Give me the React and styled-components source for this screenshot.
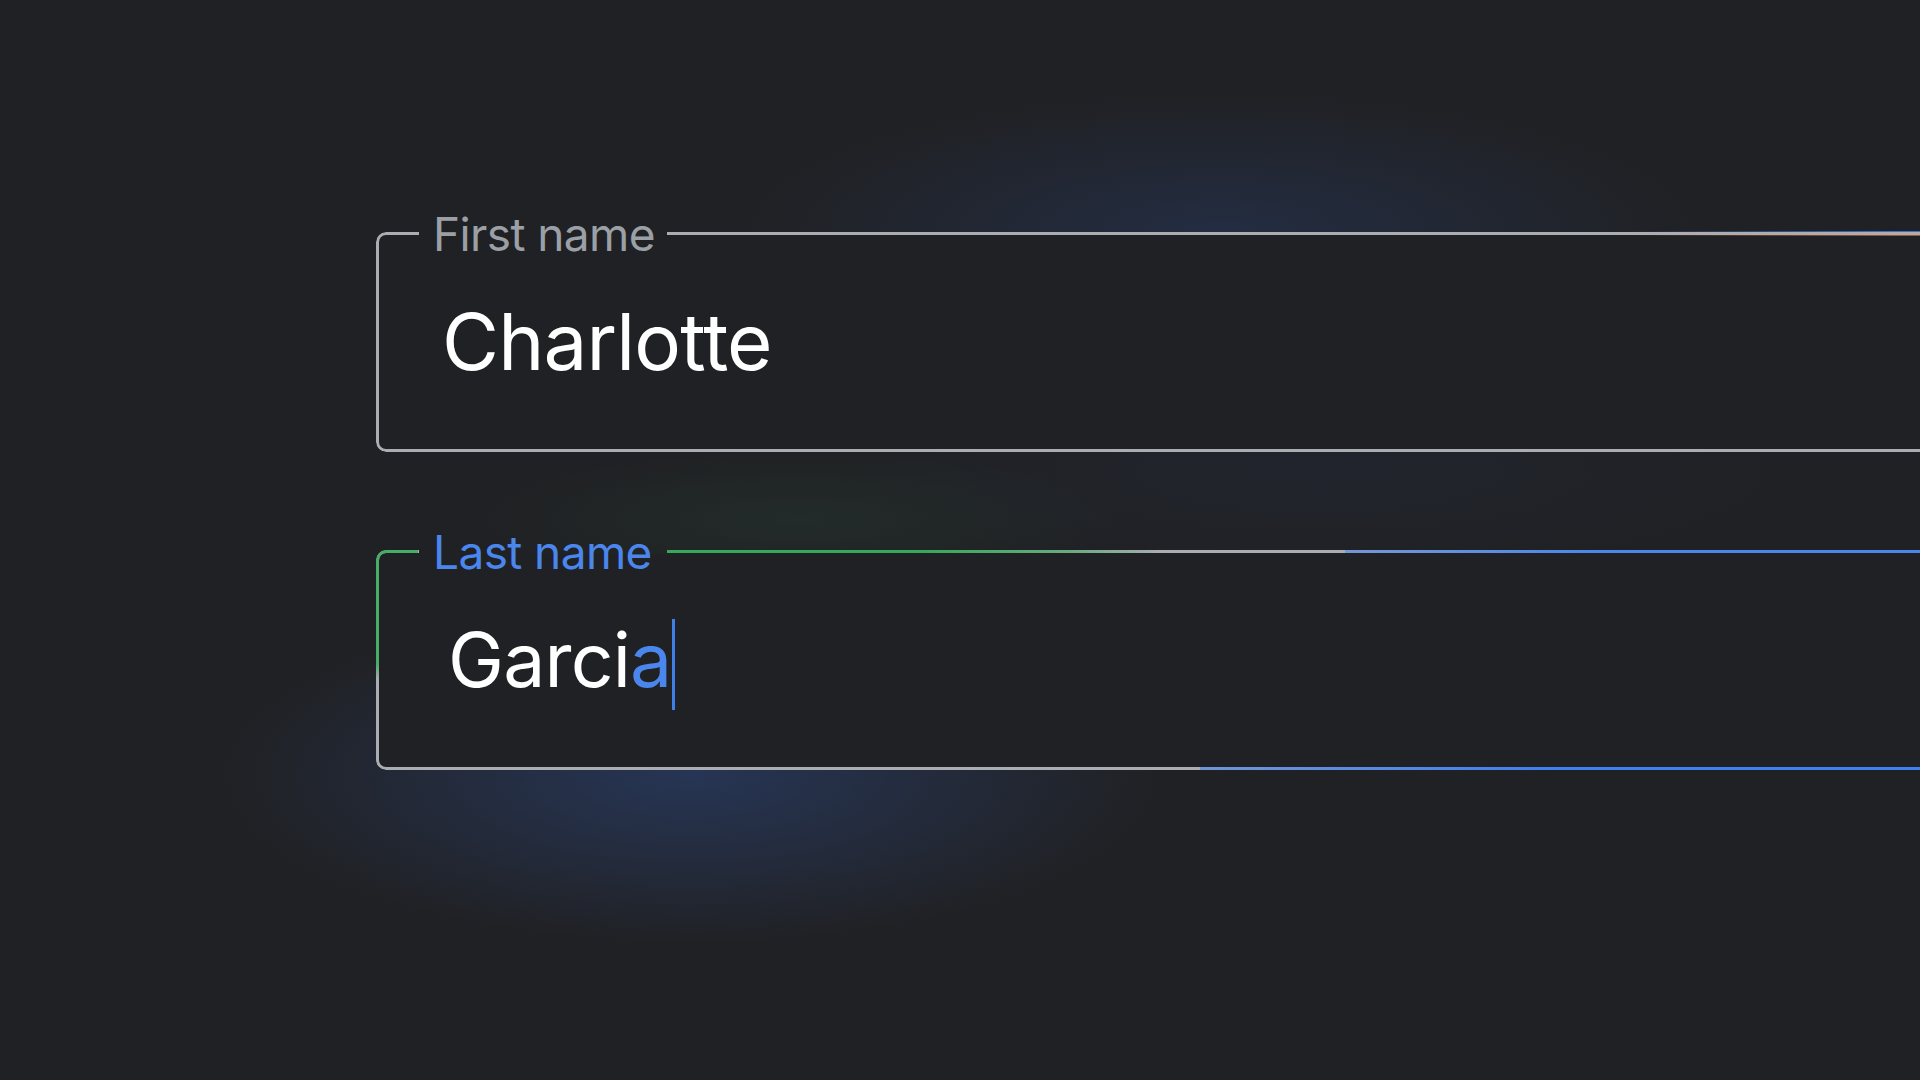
import React from 'react';
import styled, { createGlobalStyle } from 'styled-components';

const GlobalStyle = createGlobalStyle`
  html, body {
    margin: 0;
    padding: 0;
    background: #202124;
    overflow: hidden;
  }
`;

const fields = [
  { label: 'First name', value: 'Charlotte', focused: false },
  { label: 'Last name', value: 'Garcia', focused: true },
];

const App = () => {
  return (
    <>
      <GlobalStyle />
      <Page>
        <Form>
          {fields.map((field) => (
            <Field key={field.label} $focused={field.focused}>
              <Label $focused={field.focused}>{field.label}</Label>
              {field.focused ? (
                <>
                  <CornerStroke />
                  <TopStroke />
                  <TopBlueStroke />
                  <BottomBlueStroke />
                </>
              ) : (
                <EdgeFringe />
              )}
              <Value $focused={field.focused}>
                {field.focused ? (
                  <>
                    {field.value.slice(0, -1)}
                    <Typed>{field.value.slice(-1)}</Typed>
                    <Caret />
                  </>
                ) : (
                  field.value
                )}
              </Value>
            </Field>
          ))}
        </Form>
      </Page>
    </>
  );
};

export default App;

const Page = styled.div`
  width: 1920px;
  height: 1080px;
  overflow: hidden;
  font-family: Inter, 'Open Sans', 'Liberation Sans', sans-serif;
  background:
    radial-gradient(ellipse 320px 70px at 800px 520px, rgba(52, 120, 80, 0.12), transparent 100%),
    radial-gradient(ellipse 480px 140px at 1220px 232px, rgba(40, 62, 110, 0.4), transparent 100%),
    radial-gradient(ellipse 470px 170px at 690px 775px, rgba(44, 70, 125, 0.55), transparent 100%),
    radial-gradient(ellipse 480px 110px at 1320px 470px, rgba(40, 62, 110, 0.12), transparent 100%),
    #202124;
`;

const Form = styled.div`
  display: flex;
  flex-direction: column;
  gap: 98px;
  padding: 232px 0 0 376px;
`;

// border lives on ::before so the label notch can be cut out and stay see-through
const Field = styled.div`
  position: relative;
  box-sizing: border-box;
  width: 1700px;
  height: 220px;
  border-radius: 10px;

  &::before {
    content: '';
    position: absolute;
    inset: 0;
    border: 3px solid #aaadb2;
    border-radius: 10px;
    background: #202124;
    -webkit-mask:
      linear-gradient(#000 0 0),
      linear-gradient(#000 0 0) 43px 0 / 248px 4px no-repeat;
    -webkit-mask-composite: xor;
    mask:
      linear-gradient(#000 0 0),
      linear-gradient(#000 0 0) 43px 0 / 248px 4px no-repeat;
    mask-composite: exclude;
  }
`;

const Label = styled.span`
  position: absolute;
  top: -22px;
  left: 57px;
  font-size: 46px;
  line-height: 48px;
  letter-spacing: -0.6px;
  color: ${({ $focused }) => ($focused ? '#4a86ec' : '#9aa0a6')};
  z-index: 2;
`;

const CornerStroke = styled.span`
  position: absolute;
  top: 0;
  left: 0;
  width: 42px;
  height: 129px;
  border-top: 3px solid #45ad64;
  border-left: 3px solid #45ad64;
  border-top-left-radius: 10px;
  box-sizing: border-box;
  -webkit-mask: linear-gradient(to bottom, #000 88%, transparent);
  mask: linear-gradient(to bottom, #000 88%, transparent);
  z-index: 1;
`;

const TopStroke = styled.span`
  position: absolute;
  top: 0;
  left: 291px;
  width: 495px;
  height: 3px;
  background: linear-gradient(
    to right,
    #37a858 0%,
    #37a858 52%,
    rgba(55, 168, 88, 0.55) 82%,
    rgba(55, 168, 88, 0) 100%
  );
  z-index: 1;
`;

const TopBlueStroke = styled.span`
  position: absolute;
  top: 0;
  left: 969px;
  right: 0;
  height: 3px;
  background: linear-gradient(to right, rgba(74, 134, 236, 0.55), #4a86ec 35%);
  z-index: 1;
`;

const BottomBlueStroke = styled.span`
  position: absolute;
  bottom: 0;
  left: 824px;
  right: 0;
  height: 3px;
  background: linear-gradient(to right, rgba(74, 134, 236, 0.6), #3f7ff0 40%);
  z-index: 1;
`;

const EdgeFringe = styled.span`
  position: absolute;
  top: -1px;
  left: 1250px;
  right: 0;
  height: 3px;
  border-top: 1px solid rgba(66, 133, 244, 0.8);
  border-bottom: 1px solid rgba(214, 90, 40, 0.8);
  -webkit-mask: linear-gradient(to right, transparent, #000 60%);
  mask: linear-gradient(to right, transparent, #000 60%);
  z-index: 1;
`;

const Value = styled.div`
  position: relative;
  z-index: 1;
  padding: ${({ $focused }) => ($focused ? '69px 0 0 72px' : '71px 0 0 66px')};
  font-size: ${({ $focused }) => ($focused ? '75px' : '78px')};
  line-height: 1;
  letter-spacing: -0.8px;
  color: #ffffff;
  white-space: nowrap;
`;

const Typed = styled.span`
  color: #4a86ec;
`;

const Caret = styled.span`
  display: inline-block;
  width: 3px;
  height: 91px;
  margin-left: 1px;
  vertical-align: -23px;
  background: #3f7fe8;
`;
